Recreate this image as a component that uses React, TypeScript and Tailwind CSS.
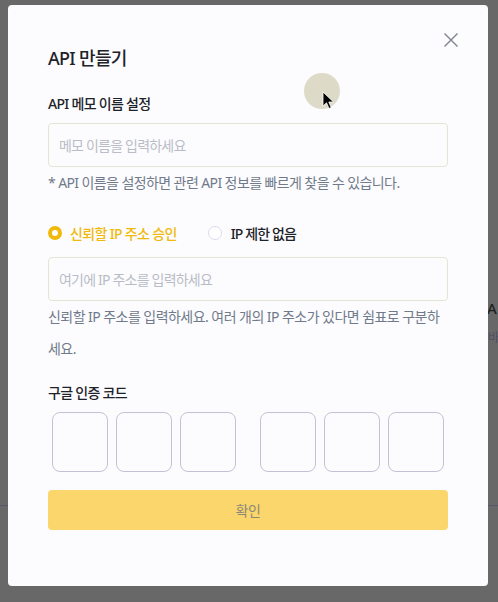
export default function App() {
  return (
    <div className="relative h-[602px] w-[498px] overflow-hidden bg-[#686868] pl-[8px] pt-[5px] font-['Noto_Sans','Noto_Sans_CJK_KR',sans-serif]">
      {/* page content behind the overlay */}
      <div className="absolute left-[487px] top-[299px] text-[15px] font-medium leading-[18px] text-[#1f1f22]">A</div>
      <div className="absolute left-[488px] top-[331px] text-[12px] leading-[14px] text-[#4c4f63]">바</div>
      <div className="absolute left-0 top-[505px] h-px w-full bg-[#56576a]" />

      <div className="relative h-[581px] w-[480px] rounded-[4px] bg-[#fcfcfe] px-10 pt-[41px]">
        <button className="absolute right-[30px] top-[28px] flex h-[14px] w-[14px] items-center justify-center">
          <svg width="14" height="14" viewBox="0 0 14 14" fill="none">
            <path d="M0.5 0.5 L13.5 13.5 M13.5 0.5 L0.5 13.5" stroke="#7d838e" strokeWidth="1.4" />
          </svg>
        </button>

        <h2 className="text-[18px] font-medium leading-[24px] tracking-[-0.7px] text-[#1e2329]">API 만들기</h2>

        <div className="mt-[24px] text-[14px] font-medium leading-[20px] tracking-[-0.7px] text-[#1e2329]">API 메모 이름 설정</div>
        <div className="mt-[9px] flex h-[44px] items-center rounded-[4px] border border-[#e6e4d2] pl-[10px] text-[14px] tracking-[-0.8px] text-[#b9bcc6]">
          메모 이름을 입력하세요
        </div>
        <div className="mt-[7px] text-[14px] leading-[18px] tracking-[-0.6px] text-[#707a8a]">
          * API 이름을 설정하면 관련 API 정보를 빠르게 찾을 수 있습니다.
        </div>

        <div className="mt-[31px] flex h-[20px] items-center text-[14px] font-medium">
          <div className="flex items-center">
            <span className="h-[14px] w-[14px] rounded-full border-[4px] border-[#f0b90b] bg-white" />
            <span className="ml-[8px] tracking-[-0.65px] text-[#f0b90b]">신뢰할 IP 주소 승인</span>
          </div>
          <div className="ml-[31px] flex items-center">
            <span className="h-[14px] w-[14px] rounded-full border border-[#dcdaf0] bg-white" />
            <span className="ml-[9px] tracking-[-0.9px] text-[#1e2329]">IP 제한 없음</span>
          </div>
        </div>

        <div className="mt-[14px] flex h-[44px] items-center rounded-[4px] border border-[#e6e4d2] pl-[10px] text-[14px] tracking-[-0.8px] text-[#b9bcc6]">
          여기에 IP 주소를 입력하세요
        </div>
        <div className="w-[392px] break-all text-[14px] leading-[32px] tracking-[-0.55px] text-[#707a8a]">
          신뢰할 IP 주소를 입력하세요. 여러 개의 IP 주소가 있다면 쉼표로 구분하세요.
        </div>

        <div className="mt-[18px] text-[14px] font-medium leading-[20px] tracking-[-0.7px] text-[#1e2329]">구글 인증 코드</div>
        <div className="mt-[9px] flex px-1">
          <div className="flex gap-2">
            <div className="h-[60px] w-[56px] rounded-[8px] border border-[#c3c2d4]" />
            <div className="h-[60px] w-[56px] rounded-[8px] border border-[#c3c2d4]" />
            <div className="h-[60px] w-[56px] rounded-[8px] border border-[#c3c2d4]" />
          </div>
          <div className="ml-[24px] flex gap-2">
            <div className="h-[60px] w-[56px] rounded-[8px] border border-[#c3c2d4]" />
            <div className="h-[60px] w-[56px] rounded-[8px] border border-[#c3c2d4]" />
            <div className="h-[60px] w-[56px] rounded-[8px] border border-[#c3c2d4]" />
          </div>
        </div>

        <button className="mt-[18px] flex h-[40px] w-full items-center justify-center rounded-[4px] bg-[#fad66c] text-[14px] tracking-[-0.5px] text-[#8c8876]">
          확인
        </button>
      </div>

      {/* screen-recording cursor highlight */}
      <div className="absolute left-[304px] top-[73px] h-[36px] w-[36px] rounded-full bg-[#dddbc8]" />
      <svg className="absolute left-[322px] top-[91px]" width="13" height="19" viewBox="0 0 13 19">
        <path d="M1 1 L1 15 L4.5 11.8 L7 17.5 L9.2 16.5 L6.8 11 L11.5 11 Z" fill="#000" stroke="#fff" strokeWidth="0.8" />
      </svg>
    </div>
  );
}
